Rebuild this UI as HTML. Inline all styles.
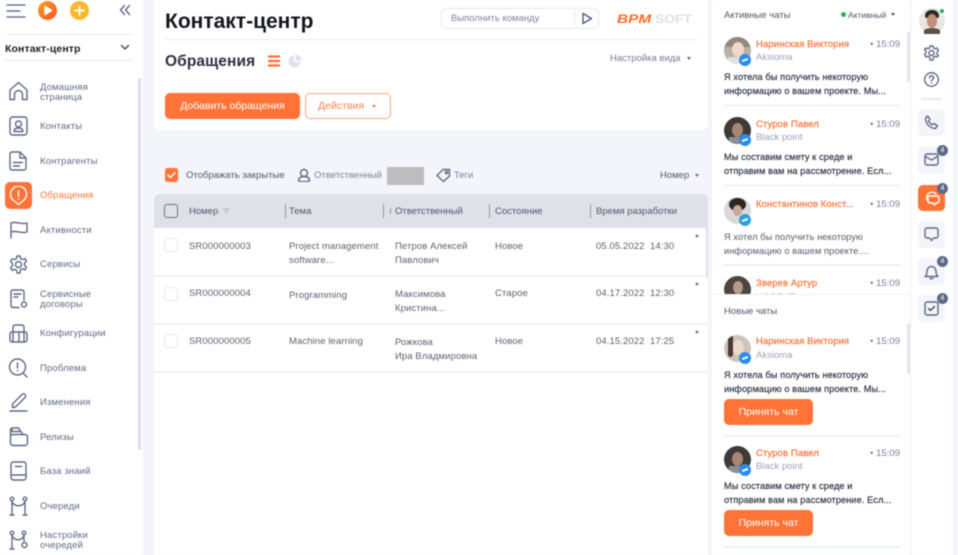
<!DOCTYPE html>
<html lang="ru"><head><meta charset="utf-8"><title>Контакт-центр</title>
<style>
*{box-sizing:border-box;margin:0;padding:0}
html,body{width:958px;height:555px;overflow:hidden;background:#f4f5fa}
body{position:relative;font-family:"Liberation Sans","Noto Sans CJK SC",sans-serif;color:#2b3040}
.a,.t,svg.i{position:absolute}
.t{white-space:nowrap;line-height:1.2}
#wrap{position:absolute;left:0;top:0;width:958px;height:555px;overflow:hidden;filter:blur(.4px)}
.n{font-size:9.5px;color:#5e6a85;line-height:9.5px;left:40px;letter-spacing:.15px}
.h{font-size:9.5px;color:#4e566b;top:205.5px}
.c{font-size:9.5px;color:#5b6172;letter-spacing:.1px}
.nm{font-size:9.5px;color:#ff7337;letter-spacing:.1px;left:756px;-webkit-text-stroke:.2px #ff7337}
.tm{font-size:9.6px;color:#74809c;left:870px}
.co{font-size:9.5px;color:#9aa3b8;left:756px}
.m{font-size:9.2px;color:#333849;left:724px;letter-spacing:.1px;-webkit-text-stroke:.2px #333849}
.ln{position:absolute;left:724px;width:176px;height:1px;background:#e6e8ef}
.btn{position:absolute;left:724px;width:89px;height:26px;background:#ff7337;border-radius:5px;color:#fff;font-size:10.5px;text-align:center;line-height:26px}
.rb{position:absolute;left:918px;width:27px;height:27px;background:#f4f5fa;border-radius:5px}
.bd{position:absolute;left:937px;width:11px;height:11px;background:#5e6a85;border-radius:50%;color:#fff;font-size:7px;text-align:center;line-height:11px;border:0}
.cb{position:absolute;left:164px;width:14px;height:14px;background:#fff;border:1px solid #e6e8ef;border-radius:3px}
.av{position:absolute;left:724px;width:27px;height:27px;border-radius:50%;overflow:hidden}
.ms{position:absolute;width:12px;height:12px;border-radius:50%;background:#2a8cf0;left:739px}
.ms:after{content:"";position:absolute;left:3px;top:5px;width:6px;height:2px;background:#fff;transform:rotate(-20deg)}
.rl{position:absolute;left:154px;width:554px;height:2px;background:#f1f2f7}
svg.i{fill:none;stroke:#5e6a85;stroke-width:1.4;stroke-linecap:round;stroke-linejoin:round}
.sep{position:absolute;top:204px;width:1px;height:14px;background:#8d95a8}
.car{position:absolute;width:0;height:0;border-left:2.5px solid transparent;border-right:2.5px solid transparent;border-top:3px solid #5e6a85}
</style></head><body><div id="wrap">

<!-- sidebar -->
<div class="a" style="left:0;top:0;width:143px;height:555px;background:#fff"></div>
<svg class="i" style="left:6px;top:4px" width="20" height="14" viewBox="0 0 20 14"><path d="M1 1h18M1 7h13M1 13h18" stroke="#6b7690"/></svg>
<div class="a" style="left:38px;top:1px;width:19px;height:19px;border-radius:50%;background:linear-gradient(135deg,#ffa21f,#f4502a)"></div>
<svg class="i" style="left:38px;top:1px" width="19" height="19" viewBox="0 0 19 19"><path d="M7 5.5v8l6.5-4z" fill="#fff" stroke="#fff"/></svg>
<div class="a" style="left:70px;top:1px;width:19px;height:19px;border-radius:50%;background:#fdb62f"></div>
<svg class="i" style="left:70px;top:1px" width="19" height="19" viewBox="0 0 19 19"><path d="M9.5 5v9M5 9.5h9" stroke="#fff" stroke-width="1.8"/></svg>
<svg class="i" style="left:119px;top:4px" width="12" height="12" viewBox="0 0 12 12"><path d="M5.500 1.500 1.500 6l4 4.500M10.500 1.500 6.500 6l4 4.500" stroke="#5e6a85"/></svg>
<div class="a" style="left:5px;top:34px;width:128px;height:1px;background:#e8eaf0"></div>
<div class="t" style="left:5px;top:43px;font-size:10.5px;font-weight:bold;color:#1d2029;letter-spacing:.1px">Контакт-центр</div>
<svg class="i" style="left:120px;top:44px" width="10" height="7" viewBox="0 0 10 7"><path d="M1.500 1.500 5 5l3.500-3.500" stroke="#3f4860"/></svg>
<div class="a" style="left:5px;top:60px;width:128px;height:1px;background:#e8eaf0"></div>
<div class="a" style="left:138px;top:78px;width:3px;height:372px;background:#dde0ea;border-radius:2px"></div>

<svg class="i" style="left:8px;top:81px" width="21" height="21" viewBox="0 0 21 21"><path d="M2 18.500V9L10.500 1.500 19 9v9.500h-4.500v-5a4 4 0 0 0-8 0v5z"/></svg>
<div class="t n" style="top:83px">Домашняя<br>страница</div>
<svg class="i" style="left:9px;top:116px" width="19" height="20" viewBox="0 0 19 20"><rect x="1" y="1" width="17" height="18" rx="2.500"/><circle cx="9.500" cy="8" r="3"/><path d="M5 15.500c0-2.500 2-3.500 4.500-3.500s4.500 1 4.500 3.500z"/></svg>
<div class="t n" style="top:122px">Контакты</div>
<svg class="i" style="left:9px;top:151px" width="18" height="20" viewBox="0 0 18 20"><path d="M3 1h8l6 6v10a2 2 0 0 1-2 2H3a2 2 0 0 1-2-2V3a2 2 0 0 1 2-2zM11 1v6h6M4.500 11.500h9M4.500 15h6"/></svg>
<div class="t n" style="top:156.5px">Контрагенты</div>
<div class="a" style="left:5px;top:182px;width:27px;height:27px;border-radius:5px;background:#ff7337"></div>
<svg class="i" style="left:9px;top:186px" width="19" height="20" viewBox="0 0 19 20"><path d="M9.500 18.500 3.500 13.500A8 8 0 1 1 15.500 13.500zM9.500 5v5.500M9.500 13v.3" stroke="#fff"/></svg>
<div class="t n" style="top:191px;color:#ff7337">Обращения</div>
<svg class="i" style="left:10px;top:221px" width="18" height="18" viewBox="0 0 18 18"><path d="M1 17V2c5-2 10 2 16 0v9c-6 2-11-2-16 0"/></svg>
<div class="t n" style="top:225.5px">Активности</div>
<svg class="i" style="left:9px;top:255px" width="19" height="19" viewBox="0 0 19 19"><circle cx="9.500" cy="9.500" r="3"/><path d="M8 1h3l.5 2.500 2 1 2.500-1 1.500 2.500-2 2v2.500l2 1.500-1.500 2.800-2.500-1-2 1L11 18H8l-.5-2.700-2-1-2.500 1L1.500 12.500l2-1.500V8.500l-2-2L3 4l2.500.5 2-1z"/></svg>
<div class="t n" style="top:260px">Сервисы</div>
<svg class="i" style="left:10px;top:289px" width="19" height="20" viewBox="0 0 19 20"><path d="M9 18.500H3a2 2 0 0 1-2-2V3a2 2 0 0 1 2-2h9a2 2 0 0 1 2 2v8M4 5h7M4 8h4"/><circle cx="14" cy="15.500" r="2.500"/></svg>
<div class="t n" style="top:290px">Сервисные<br>договоры</div>
<svg class="i" style="left:9px;top:324px" width="19" height="19" viewBox="0 0 19 19"><rect x="1" y="8" width="17" height="10" rx="2"/><path d="M4 8V3a2 2 0 0 1 2-2h7a2 2 0 0 1 2 2v15M4 8v10M10 8v10"/></svg>
<div class="t n" style="top:329px">Конфигурации</div>
<svg class="i" style="left:8px;top:358px" width="21" height="20" viewBox="0 0 21 20"><circle cx="9.500" cy="9" r="8"/><path d="m15 15 4 4M9.500 5v5M9.500 12.500v.3"/></svg>
<div class="t n" style="top:363.5px">Проблема</div>
<svg class="i" style="left:9px;top:392px" width="20" height="20" viewBox="0 0 20 20"><path d="M1 19h17M3.500 15.500V12L13 2.500a2 2 0 0 1 3 3L6.500 15z"/></svg>
<div class="t n" style="top:398px">Изменения</div>
<svg class="i" style="left:9px;top:427px" width="20" height="20" viewBox="0 0 20 20"><path d="M1.500 8V3a2 2 0 0 1 2-2h6l2 3M3 1.500v3h9l2 3"/><rect x="1.500" y="7.500" width="17" height="11" rx="2.500"/></svg>
<div class="t n" style="top:432.5px">Релизы</div>
<svg class="i" style="left:10px;top:461px" width="17" height="20" viewBox="0 0 17 20"><rect x="1" y="1" width="15" height="18" rx="2.500"/><path d="M1 14h15M5.500 5.500h6"/></svg>
<div class="t n" style="top:467px">База знаий</div>
<svg class="i" style="left:9px;top:496px" width="19" height="20" viewBox="0 0 19 20"><circle cx="3" cy="3" r="1.800"/><circle cx="16" cy="3" r="1.800"/><path d="M3 5v14M16 5v14M1 19h4M14 19h4M3 6c3 5 10 5 13 0"/></svg>
<div class="t n" style="top:501.5px">Очереди</div>
<svg class="i" style="left:9px;top:530px" width="20" height="20" viewBox="0 0 20 20"><circle cx="3" cy="3" r="1.800"/><circle cx="15" cy="3" r="1.800"/><circle cx="15.500" cy="15" r="2.500"/><path d="M3 5v14M15 5v6M1 19h4M3 6c3 5 9 5 12 0"/></svg>
<div class="t n" style="top:531px">Настройки<br>очередей</div>

<!-- top card -->
<div class="a" style="left:154px;top:0;width:554px;height:130px;background:#fff;border-radius:0 0 6px 6px"></div>
<div class="t" style="left:165px;top:9px;font-size:21px;font-weight:bold;color:#15171e">Контакт-центр</div>
<div class="a" style="left:165px;top:39px;width:532px;height:1px;background:#e8eaf0"></div>
<div class="a" style="left:441px;top:8px;width:158px;height:21px;border:1px solid #e6e8ef;border-radius:5px;background:#fff"></div>
<div class="t" style="left:451px;top:13px;font-size:9.5px;color:#7a849c">Выполнить команду</div>
<div class="a" style="left:574px;top:10px;width:1px;height:16px;background:#e6e8ef"></div>
<svg class="i" style="left:581px;top:12px" width="12" height="13" viewBox="0 0 12 13"><path d="M2 1.500v10l8.500-5z" stroke="#4e5a7c"/></svg>
<div class="t" style="left:617px;top:12px;font-size:12px;font-weight:bold;font-style:italic;color:#ff6a25;transform-origin:left;transform:scaleX(1.28)">BPM</div>
<div class="t" style="left:655px;top:12px;font-size:12px;color:#dcdfe5;font-weight:bold;transform-origin:left;transform:scaleX(1.15)">SOFT</div>
<div class="t" style="left:165px;top:53px;font-size:15.5px;font-weight:bold;color:#2b3142;letter-spacing:.1px">Обращения</div>
<svg class="i" style="left:267px;top:55px" width="14" height="12" viewBox="0 0 14 12"><path d="M1 1.500h12M1 6h12M1 10.500h12" stroke="#ff6f33" stroke-width="2.200" stroke-linecap="butt"/></svg>
<svg class="i" style="left:288px;top:54px;stroke:none" width="14" height="14" viewBox="0 0 14 14"><path d="M6 1.500A6 6 0 1 0 12.500 8H6z" fill="#dfe1e9"/><path d="M7.500 .5A6 6 0 0 1 13.500 6.500H7.500z" fill="#dfe1e9"/></svg>
<div class="t" style="left:610px;top:53px;font-size:9.5px;color:#707a93">Настройка вида</div>
<div class="car" style="left:687px;top:57px"></div>
<div class="a" style="left:165px;top:93px;width:135px;height:26px;background:#ff7337;border-radius:5px;color:#fff;font-size:10.5px;line-height:26px;text-align:center">Добавить обращения</div>
<div class="a" style="left:305px;top:93px;width:86px;height:26px;border:1px solid #ffa885;border-radius:5px;background:#fff"></div>
<div class="t" style="left:318px;top:100px;font-size:10.5px;color:#ff7f4d">Действия</div>
<div class="car" style="left:372px;top:105px;border-top-color:#ff7337"></div>

<!-- filters -->
<div class="a" style="left:165px;top:168px;width:13px;height:14px;background:#ff7337;border-radius:2.5px"></div>
<svg class="i" style="left:165px;top:168px" width="13" height="14" viewBox="0 0 13 14"><path d="m3 7 2.500 2.500L10 4.500" stroke="#fff" stroke-width="1.500"/></svg>
<div class="t" style="left:186px;top:170px;font-size:9.5px;color:#4e566b">Отображать закрытые</div>
<svg class="i" style="left:297px;top:168px" width="14" height="14" viewBox="0 0 14 14"><circle cx="7" cy="5" r="3.500"/><path d="M1.500 13c0-3 2-4.500 5.500-4.500s5.500 1.500 5.500 4.500c-3 .7-8 .7-11 0z"/></svg>
<div class="t" style="left:314px;top:170px;font-size:9.5px;color:#7a849c">Ответственный</div>
<div class="a" style="left:387px;top:167px;width:37px;height:18px;background:#bdbdbd"></div>
<svg class="i" style="left:436px;top:168px" width="15" height="14" viewBox="0 0 15 14"><path d="M1 7.500 7 1.500h6.500V8l-6 5.500z"/><circle cx="10.500" cy="4.500" r="1.200"/></svg>
<div class="t" style="left:454px;top:170px;font-size:9.5px;color:#7a849c">Теги</div>
<div class="t" style="left:660px;top:170px;font-size:9.5px;color:#4e566b">Номер</div>
<div class="car" style="left:695px;top:174px"></div>

<!-- table -->
<div class="a" style="left:154px;top:194px;width:554px;height:34px;background:#dfe1e9;border-radius:5px 5px 0 0"></div>
<div class="a" style="left:154px;top:228px;width:554px;height:327px;background:#fff"></div>
<div class="a" style="left:164px;top:204px;width:14px;height:14px;border:1px solid #697490;border-radius:3px"></div>
<div class="t h" style="left:189px">Номер</div>
<svg class="i" style="left:223px;top:208px" width="7" height="6" viewBox="0 0 7 6"><path d="M.5 1h6M1.500 3h4M2.500 5h2" stroke="#a3aabb" stroke-width=".7"/></svg>
<div class="sep" style="left:285px"></div><div class="t h" style="left:289px">Тема</div>
<div class="sep" style="left:383px"></div><div class="a" style="left:390px;top:208px;width:1px;height:6px;background:#8d95a8"></div><div class="t h" style="left:395px">Ответственный</div>
<div class="sep" style="left:489px"></div><div class="t h" style="left:495px">Состояние</div>
<div class="sep" style="left:590px"></div><div class="t h" style="left:596px">Время разработки</div>

<div class="cb" style="top:238px"></div>
<div class="t c" style="left:189px;top:240.5px">SR000000003</div>
<div class="t c" style="left:289px;top:240px;line-height:14px">Project management<br>software...</div>
<div class="t c" style="left:395px;top:240px;line-height:14px">Петров Алексей<br>Павлович</div>
<div class="t c" style="left:495px;top:240.5px">Новое</div>
<div class="t c" style="left:596px;top:240.5px">05.05.2022&nbsp; 14:30</div>
<div class="car" style="left:695px;top:235px"></div>
<div class="rl" style="top:275px"></div>

<div class="cb" style="top:287px"></div>
<div class="t c" style="left:189px;top:288px">SR000000004</div>
<div class="t c" style="left:289px;top:289.5px">Programming</div>
<div class="t c" style="left:395px;top:288px;line-height:14px">Максимова<br>Кристина...</div>
<div class="t c" style="left:495px;top:288px">Старое</div>
<div class="t c" style="left:596px;top:288px">04.17.2022&nbsp; 12:30</div>
<div class="car" style="left:695px;top:283px"></div>
<div class="rl" style="top:323px"></div>

<div class="cb" style="top:334px"></div>
<div class="t c" style="left:189px;top:336px">SR000000005</div>
<div class="t c" style="left:289px;top:336px">Machine learning</div>
<div class="t c" style="left:395px;top:336px;line-height:14px">Рожкова<br>Ира Владмировна</div>
<div class="t c" style="left:495px;top:336px">Новое</div>
<div class="t c" style="left:596px;top:336px">04.15.2022&nbsp; 17:25</div>
<div class="car" style="left:695px;top:331px"></div>
<div class="rl" style="top:371px"></div>
<div class="a" style="left:706px;top:228px;width:2px;height:50px;background:#dfe1e9"></div>

<!-- chats panel -->
<div class="a" style="left:712px;top:0;width:199px;height:555px;background:#fff;border-right:1px solid #eceef3"></div>
<div class="t" style="left:724px;top:10px;font-size:9.5px;color:#4e566b">Активные чаты</div>
<div class="a" style="left:841px;top:12px;width:5px;height:5px;border-radius:50%;background:#1fb45a"></div>
<div class="t" style="left:848px;top:10px;font-size:8.5px;color:#4e566b">Активный</div>
<div class="car" style="left:891px;top:13px;border-top-color:#4e566b"></div>
<div class="a" style="left:907px;top:32px;width:3px;height:50px;background:#e4e6ee"></div>

<div class="av" style="top:37px;background:#b9b2a6"><div class="a" style="left:0;top:0;width:27px;height:10px;background:#8f8a7c"></div><div class="a" style="left:8px;top:5px;width:12px;height:15px;border-radius:50%;background:#f0d8c8"></div><div class="a" style="left:4px;top:20px;width:19px;height:8px;background:#dfe0e2"></div></div>
<div class="ms" style="top:54px"></div>
<div class="t nm" style="top:38.5px">Наринская Виктория</div><div class="t tm" style="top:38.5px">• 15:09</div>
<div class="t co" style="top:52px">Aksioma</div>
<div class="t m" style="top:69.5px;line-height:14px">Я хотела бы получить некоторую<br>информацию о вашем проекте. Мы...</div>
<div class="ln" style="top:105px"></div>

<div class="av" style="top:117px;background:#3d3a38"><div class="a" style="left:8px;top:6px;width:11px;height:14px;border-radius:50%;background:#a98672"></div><div class="a" style="left:5px;top:20px;width:17px;height:7px;background:#8a8f96"></div></div>
<div class="ms" style="top:134px"></div>
<div class="t nm" style="top:118.5px">Стуров Павел</div><div class="t tm" style="top:118.5px">• 15:09</div>
<div class="t co" style="top:132px">Black point</div>
<div class="t m" style="top:149.5px;line-height:14px">Мы составим смету к среде и<br>отправим вам на рассмотрение. Есл...</div>
<div class="ln" style="top:185px"></div>

<div class="av" style="top:197px;background:#d9d9d9"><div class="a" style="left:5px;top:1px;width:17px;height:13px;border-radius:50%;background:#2c2826"></div><div class="a" style="left:9px;top:8px;width:9px;height:11px;border-radius:50%;background:#c8a898"></div></div>
<div class="ms" style="top:214px;background:#2e9fd8"></div>
<div class="t nm" style="top:198.5px">Константинов Конст...</div><div class="t tm" style="top:198.5px">• 15:09</div>
<div class="t m" style="top:230px;line-height:14px;color:#555b6b;-webkit-text-stroke:0">Я хотел бы получить некоторую<br>информацию о вашем проекте....</div>
<div class="ln" style="top:264px;height:2px;background:#eceef3"></div>

<div class="av" style="top:276px;background:#4a4642"><div class="a" style="left:9px;top:5px;width:10px;height:13px;border-radius:50%;background:#b89a88"></div></div>
<div class="t nm" style="top:278px">Зверев Артур</div><div class="t tm" style="top:278px">• 15:09</div>
<div class="t co" style="top:292px">НОРБИТ</div>

<div class="a" style="left:712px;top:294px;width:198px;height:261px;background:#fff;border-top:1px solid #eceef3"></div>
<div class="t" style="left:724px;top:306px;font-size:9.5px;color:#4e566b">Новые чаты</div>
<div class="a" style="left:907px;top:324px;width:3px;height:50px;background:#e4e6ee"></div>

<div class="av" style="top:335px;background:#cfc4bc"><div class="a" style="left:8px;top:5px;width:12px;height:15px;border-radius:50%;background:#eed8cb"></div><div class="a" style="left:4px;top:0;width:5px;height:22px;background:#4a3a33;border-radius:3px"></div></div>
<div class="ms" style="top:352px"></div>
<div class="t nm" style="top:336px">Наринская Виктория</div><div class="t tm" style="top:336px">• 15:09</div>
<div class="t co" style="top:350px">Aksioma</div>
<div class="t m" style="top:367.5px;line-height:14px">Я хотела бы получить некоторую<br>информацию о вашем проекте. Мы...</div>
<div class="btn" style="top:399px">Принять чат</div>
<div class="ln" style="top:435px;height:2px;background:#eceef3"></div>

<div class="av" style="top:446px;background:#3d3a38"><div class="a" style="left:8px;top:6px;width:11px;height:14px;border-radius:50%;background:#a98672"></div><div class="a" style="left:5px;top:20px;width:17px;height:7px;background:#8a8f96"></div></div>
<div class="ms" style="top:464px"></div>
<div class="t nm" style="top:448px">Стуров Павел</div><div class="t tm" style="top:448px">• 15:09</div>
<div class="t co" style="top:461px">Black point</div>
<div class="t m" style="top:479px;line-height:14px">Мы составим смету к среде и<br>отправим вам на рассмотрение. Есл...</div>
<div class="btn" style="top:510px">Принять чат</div>
<div class="ln" style="top:546px;height:2px;background:#eceef3"></div>

<!-- right rail -->
<div class="a" style="left:911px;top:0;width:42px;height:555px;background:#fff"></div>
<div class="a" style="left:919px;top:8px;width:26px;height:26px;border-radius:50%;background:#e9e5e2"></div>
<div class="a" style="left:925px;top:10px;width:14px;height:8px;border-radius:6px 6px 2px 2px;background:#2e2a28"></div>
<div class="a" style="left:927px;top:14px;width:10px;height:14px;border-radius:50%;background:#c0907a"></div>
<div class="a" style="left:924px;top:28px;width:16px;height:6px;border-radius:50% 50% 0 0;background:#5c5048"></div>
<div class="a" style="left:940px;top:9px;width:4px;height:4px;border-radius:50%;background:#1fb45a"></div>
<svg class="i" style="left:924px;top:45px" width="15" height="16" viewBox="0 0 15 16"><circle cx="7.500" cy="8" r="2.500"/><path d="M6 1h3l.5 2 1.500.8 2-.8 1.500 2.600-1.500 1.400v2l1.500 1.400L13 12l-2-.8-1.500.8L9 15H6l-.5-3-1.500-.8-2 .8L.5 9.400 2 8V6L.5 4.600 2 3l2 .8L5.500 3z"/></svg>
<svg class="i" style="left:924px;top:72px" width="15" height="15" viewBox="0 0 15 15"><circle cx="7.500" cy="7.500" r="6.800"/><path d="M5.500 5.800a2 2 0 1 1 3 1.700c-.7.400-1 .8-1 1.600M7.500 11.200v.2"/></svg>
<div class="a" style="left:921px;top:98px;width:21px;height:1.5px;background:#e8eaf0"></div>
<div class="rb" style="top:109px"></div>
<svg class="i" style="left:924px;top:115px" width="15" height="15" viewBox="0 0 15 15"><path d="M1.500 3 3.500 1l2.500 3-1.500 1.800c.8 1.700 2.200 3.200 4 4L10 8.500l3.500 2.500-2 2.500C6 13.500 1.500 8.500 1.500 3z"/></svg>
<div class="rb" style="top:147px"></div>
<svg class="i" style="left:924px;top:153px" width="15" height="13" viewBox="0 0 15 13"><rect x="1" y="1" width="13" height="11" rx="2"/><path d="M1.500 3.500 7.500 7l6-3.500"/></svg>
<div class="bd" style="top:145px">4</div>
<div class="a" style="left:918px;top:185px;width:27px;height:26px;background:#ff7337;border-radius:5px"></div>
<svg class="i" style="left:924px;top:191px" width="16" height="15" viewBox="0 0 16 15"><path d="M4 10A5 5 0 1 1 12 3M5 5h8a2 2 0 0 1 2 2v3a2 2 0 0 1-2 2h-1l-1.500 2-1.500-2H6a2 2 0 0 1-2-2V7a2 2 0 0 1 1-2z" stroke="#fff"/></svg>
<div class="bd" style="top:183px">4</div>
<div class="rb" style="top:221px"></div>
<svg class="i" style="left:924px;top:227px" width="15" height="15" viewBox="0 0 15 15"><path d="M3 1h9a2 2 0 0 1 2 2v6a2 2 0 0 1-2 2H9.500L7.500 13.500 5.500 11H3a2 2 0 0 1-2-2V3a2 2 0 0 1 2-2z"/></svg>
<div class="rb" style="top:258px"></div>
<svg class="i" style="left:924px;top:264px" width="15" height="16" viewBox="0 0 15 16"><path d="M1 12.500h13c-1.500-1-2-2.500-2-5.500a4.500 4.500 0 0 0-9 0c0 3-.5 4.500-2 5.500zM6 14.500h3"/></svg>
<div class="bd" style="top:256px">4</div>
<div class="rb" style="top:295px"></div>
<svg class="i" style="left:924px;top:301px" width="15" height="15" viewBox="0 0 15 15"><rect x="1" y="1" width="13" height="13" rx="2"/><path d="m4.500 7.500 2 2 4-4" stroke="#3f4860"/></svg>
<div class="bd" style="top:293px">4</div>
</div></body></html>
